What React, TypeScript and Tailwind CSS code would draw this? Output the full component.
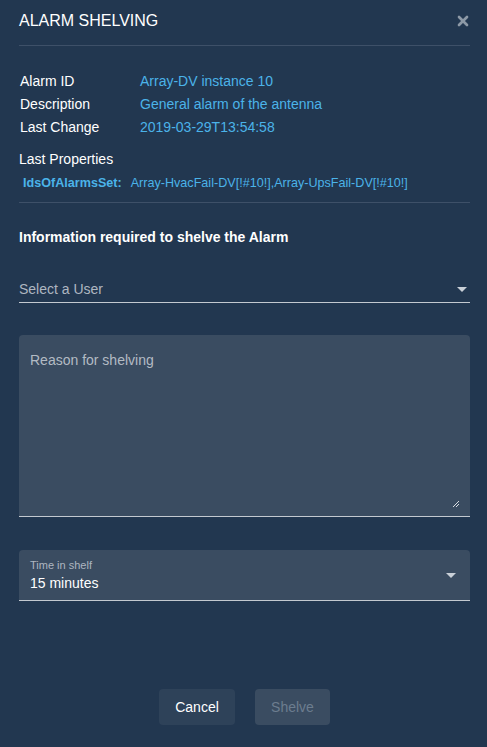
import { X } from 'lucide-react'

const rows = [
  { label: 'Alarm ID', value: 'Array-DV instance 10' },
  { label: 'Description', value: 'General alarm of the antenna' },
  { label: 'Last Change', value: '2019-03-29T13:54:58' },
]

function Caret() {
  return (
    <svg width="10" height="5" viewBox="0 0 10 5" className="shrink-0">
      <path d="M0 0h10L5 5z" fill="#c9d0d8" />
    </svg>
  )
}

export default function App() {
  return (
    <div className="min-h-[747px] w-[487px] bg-[#223750] text-white font-['Liberation_Sans',Arial,sans-serif] pl-[19px] pr-[17px] flex flex-col">
      {/* header */}
      <div className="flex items-center justify-between h-[46px] border-b border-[#3e5068] pb-[4px]">
        <h2 className="text-[16px] leading-none">ALARM SHELVING</h2>
        <X size={16} strokeWidth={4} className="text-[#8d99a6] -mr-[1px]" />
      </div>

      {/* alarm info */}
      <div className="pt-[26px] pl-[1px] flex flex-col gap-[5px] text-[14px]">
        {rows.map((r) => (
          <div key={r.label} className="flex h-[18px] items-center">
            <span className="w-[120px]">{r.label}</span>
            <span className="text-[#4bb3e9]">{r.value}</span>
          </div>
        ))}
      </div>

      <div className="pt-[14px] text-[14px] h-[34px] flex items-end">Last Properties</div>
      <div className="mt-[3px] flex items-center gap-[9px] pl-[4px] h-[24px] text-[12.6px] text-[#4bb3e9] pb-[4px]">
        <span className="font-bold">IdsOfAlarmsSet:</span>
        <span>Array-HvacFail-DV[!#10!],Array-UpsFail-DV[!#10!]</span>
      </div>
      <div className="border-b border-[#3e5068] mt-[5px]" />

      {/* form */}
      <h3 className="mt-[27px] text-[14px] font-bold leading-none">Information required to shelve the Alarm</h3>

      <div className="mt-[38px] flex items-center justify-between h-[21px] border-b border-[#c3c9d0] pr-[3px] pb-[5px]">
        <span className="text-[14px] text-[#aeb6c0]">Select a User</span>
        <Caret />
      </div>

      <div className="mt-[32px] h-[182px] bg-[#3a4c61] rounded-t-[4px] border-b border-[#c3c9d0] relative px-[11px] pt-[13px]">
        <span className="text-[14px] text-[#b3bbc4]">Reason for shelving</span>
        <svg width="8" height="8" viewBox="0 0 8 8" className="absolute right-[10px] bottom-[8px]">
          <path d="M7 1L1 7M7 4L4 7" stroke="#d9dde2" strokeWidth="1" />
        </svg>
      </div>

      <div className="mt-[33px] h-[51px] bg-[#3a4c61] rounded-t-[4px] border-b border-[#c3c9d0] flex items-center justify-between pl-[11px] pr-[14px]">
        <div className="flex flex-col">
          <span className="text-[11px] leading-[13px] text-[#aeb6c0]">Time in shelf</span>
          <span className="mt-[2px] text-[14px] leading-[18px]">15 minutes</span>
        </div>
        <Caret />
      </div>

      {/* buttons */}
      <div className="mt-[88px] flex justify-center gap-[20px]">
        <button className="w-[76px] h-[36px] rounded-[4px] bg-[#2e4259] text-[14px] text-white">Cancel</button>
        <button disabled className="w-[75px] h-[36px] rounded-[4px] bg-[#3a4c61] text-[14px] text-[#6c7d8f]">Shelve</button>
      </div>
    </div>
  )
}
